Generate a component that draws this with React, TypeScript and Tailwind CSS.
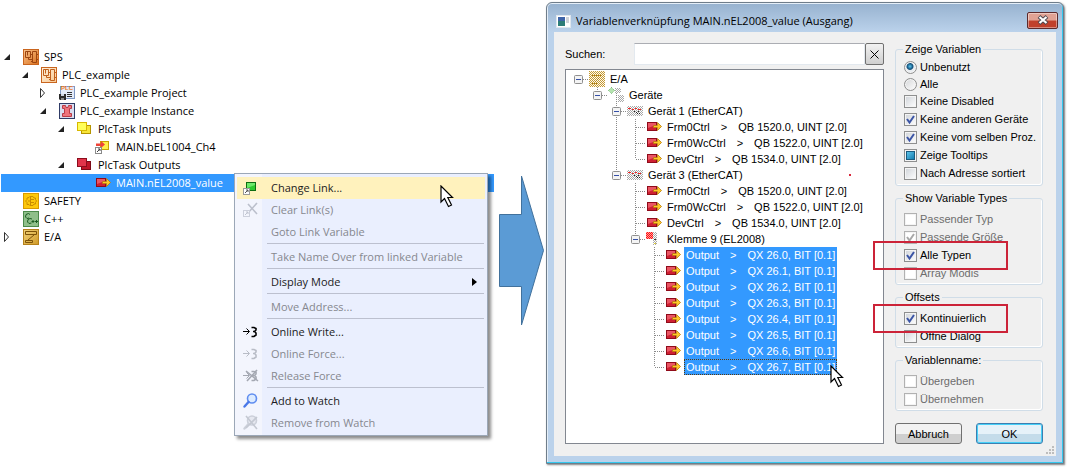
import React from "react";

/* ---------- project tree icons ---------- */

function ChipIcon({ dark = false }: { dark?: boolean }) {
  const line = dark ? "#9c4510" : "#c0601c";
  return (
    <svg width="16" height="16" viewBox="0 0 16 16" className="shrink-0">
      <defs>
        <linearGradient id={dark ? "chipDark" : "chipLight"} x1="0" y1="0" x2="1" y2="1">
          <stop offset="0" stopColor={dark ? "#fbc38c" : "#fff1dc"} />
          <stop offset="1" stopColor={dark ? "#d9701c" : "#f9c993"} />
        </linearGradient>
      </defs>
      <rect x="0.5" y="0.5" width="15" height="15" fill={dark ? "url(#chipDark)" : "url(#chipLight)"} stroke="#c9651e" />
      <path d="M2.5 2.5H7.5V8.5H2.5ZM4.5 2.5V6.5M5.500 8.500V10.500H9" fill="none" stroke={line} />
      <path d="M9.500 2.500H13.500V13.500H9.500ZM8 5.500H9M8 12.500H9M14 5.500H15M14 10.500H15" fill="none" stroke={line} />
    </svg>
  );
}

function ProjectIcon() {
  return (
    <svg width="16" height="16" viewBox="0 0 16 16" className="shrink-0">
      <rect x="1.5" y="1.5" width="14" height="12" fill="#e3ebf8" stroke="#7f98c4" />
      <path d="M8 7.500H13M8 9.500H13M8 11.500H13" stroke="#333" />
      <text x="2" y="5" fontSize="6" fontWeight="700" fontFamily="Liberation Sans, sans-serif" fill="#ee7a1c">PLC</text>
      <path d="M0 9H7V15H1L0 14Z" fill="#2a2a2a" />
      <rect x="2" y="9" width="3" height="2" fill="#cfd6e2" />
      <rect x="2" y="13" width="3" height="2" fill="#8a8a8a" />
    </svg>
  );
}

function InstanceIcon() {
  return (
    <svg width="16" height="16" viewBox="0 0 16 16" className="shrink-0">
      <rect x="0.5" y="0.5" width="15" height="15" fill="#d9ddf0" stroke="#2f3b66" />
      <path d="M3.5 2.5H6.500L7 4.500H9L9.500 2.500H12.500V5.500H10.500V10.500H12.500V13.500H3.500V10.500H5.500V5.500H3.500Z" fill="#ee737c" stroke="#b83a46" />
    </svg>
  );
}

function PairIcon({ red = false }: { red?: boolean }) {
  return (
    <svg width="16" height="16" viewBox="0 0 16 16" className="shrink-0">
      <rect x="4.500" y="4.500" width="9" height="8" fill={red ? "#c01428" : "#f7e53a"} stroke={red ? "#7c0a18" : "#b59400"} />
      <rect x="0.500" y="1.500" width="9" height="8" fill={red ? "#e0344a" : "#ffff5a"} stroke={red ? "#8c0c1c" : "#d8b800"} />
    </svg>
  );
}

function LinkedInputIcon() {
  return (
    <svg width="16" height="16" viewBox="0 0 16 16" className="shrink-0">
      <rect x="5.500" y="2.500" width="8" height="8" fill="#fff04a" stroke="#c8a400" />
      <path d="M1 4.500H6V2L10 5.500L6 9V7H1Z" fill="#ef4438" />
      <rect x="0.500" y="8.500" width="6" height="6" fill="#fff" stroke="#8a8a8a" />
      <path d="M2 13L5 10M3 10H5V12" fill="none" stroke="#444" />
    </svg>
  );
}

function OutputIcon() {
  return (
    <svg width="16" height="16" viewBox="0 0 16 16" className="shrink-0">
      <rect x="1.500" y="3.500" width="9" height="8" fill="#cf2032" stroke="#8f0b1a" />
      <path d="M2 4H10V6L2 9Z" fill="#ea5564" />
      <path d="M7.500 6.500H11.500V3.500L15.500 7.500L11.500 11.500V8.500H7.500Z" fill="#ffc928" stroke="#b8780c" strokeWidth="0.800" />
    </svg>
  );
}

function SafetyIcon() {
  return (
    <svg width="16" height="16" viewBox="0 0 16 16" className="shrink-0">
      <rect x="0.500" y="0.500" width="15" height="15" fill="#fdc80c" stroke="#d99a00" />
      <path d="M7.500 3L6 4.500L4 5V6.500L2.500 8L4 9.500V11.500H6L7.500 13M7.500 3V13M8 3.500H10L11 5H12.500V6.500L13.500 8L12.500 9.500V11H11L10 12.500H8M5 8H7M8 6.500H11M8 9.500H11" fill="none" stroke="#c98c00" />
    </svg>
  );
}

function CppIcon() {
  return (
    <svg width="16" height="16" viewBox="0 0 16 16" className="shrink-0">
      <rect x="0.500" y="0.500" width="15" height="15" fill="#8fbf8a" stroke="#4c8a4a" />
      <path d="M7 3.500L5.500 2.500L3 3.500L2.500 6L4 7.500L6 7M9 8L7 7.500L5 8.500L4.500 11L6 12.500L8.500 12M8.500 10.500H11.500M10 9V12M12 10.500H15M13.500 9V12" fill="none" stroke="#1c5c22" />
    </svg>
  );
}

function IoIcon() {
  return (
    <svg width="16" height="16" viewBox="0 0 16 16" className="shrink-0">
      <defs>
        <linearGradient id="ioGold" x1="0" y1="0" x2="1" y2="1">
          <stop offset="0" stopColor="#f2d27a" />
          <stop offset="1" stopColor="#cf9a28" />
        </linearGradient>
      </defs>
      <rect x="0.500" y="0.500" width="15" height="15" fill="url(#ioGold)" stroke="#b5811a" />
      <path d="M2.500 2.500H13.500V5.500H2.500ZM11 6L5 11M2.500 11.500H9.500V13.500H2.500Z" fill="none" stroke="#7c5208" />
    </svg>
  );
}

function Twisty({ open }: { open?: boolean }) {
  return (
    <svg width="10" height="12" viewBox="0 0 10 12" className="shrink-0">
      {open ? <path d="M7 3V9H1Z" fill="#222" /> : <path d="M1.500 1.500L5.500 6L1.500 10.500Z" fill="#fff" stroke="#333" />}
    </svg>
  );
}

/* ---------- project tree ---------- */

type Node = { label: string; pad: string; open?: boolean; leaf?: boolean; icon: React.ReactNode; selected?: boolean };

const nodes: Node[] = [
  { label: "SPS", pad: "pl-0.5", open: true, icon: <ChipIcon dark /> },
  { label: "PLC_example", pad: "pl-5", open: true, icon: <ChipIcon /> },
  { label: "PLC_example Project", pad: "pl-[38px]", icon: <ProjectIcon /> },
  { label: "PLC_example Instance", pad: "pl-[38px]", open: true, icon: <InstanceIcon /> },
  { label: "PlcTask Inputs", pad: "pl-14", open: true, icon: <PairIcon /> },
  { label: "MAIN.bEL1004_Ch4", pad: "pl-[74px]", leaf: true, icon: <LinkedInputIcon /> },
  { label: "PlcTask Outputs", pad: "pl-14", open: true, icon: <PairIcon red /> },
  { label: "MAIN.nEL2008_value", pad: "pl-[74px]", leaf: true, icon: <OutputIcon />, selected: true },
  { label: "SAFETY", pad: "pl-0.5", leaf: true, icon: <SafetyIcon /> },
  { label: "C++", pad: "pl-0.5", leaf: true, icon: <CppIcon /> },
  { label: "E/A", pad: "pl-0.5", icon: <IoIcon /> },
];

function ProjectTree() {
  return (
    <ul role="tree" aria-label="Projekt" className="ml-px mr-1 pt-12">
      {nodes.map((n) => (
        <li
          key={n.label}
          role="treeitem"
          aria-selected={!!n.selected}
          className={`flex h-[18px] items-center whitespace-nowrap ${n.pad} ${n.selected ? "bg-[#3399ff] text-white" : "text-black"}`}
        >
          <span className="flex w-5 shrink-0">{!n.leaf && <Twisty open={n.open} />}</span>
          {n.icon}
          <span className="ml-[5px]">{n.label}</span>
        </li>
      ))}
    </ul>
  );
}

/* ---------- context menu ---------- */

function ChangeLinkIcon() {
  return (
    <svg width="16" height="16" viewBox="0 0 16 16">
      <rect x="3.500" y="2.500" width="9" height="8" fill="#2fcb2f" stroke="#0d6d12" />
      <path d="M4 3H12V5L4 8Z" fill="#6ee86a" />
      <rect x="0.500" y="8.500" width="6" height="6" fill="#fff" stroke="#9a9a9a" />
      <path d="M2 13L5 10M3 10H5V12" fill="none" stroke="#555" />
    </svg>
  );
}
function ClearLinkIcon() {
  return (
    <svg width="16" height="16" viewBox="0 0 16 16">
      <path d="M5 2L14 12M14 1L4 12" stroke="#bcc0cc" strokeWidth="1.600" />
      <rect x="0.500" y="8.500" width="6" height="6" fill="#f3f5fd" stroke="#ccd0dc" />
      <path d="M2 13L5 10M3 10H5V12" fill="none" stroke="#c0c4d0" />
    </svg>
  );
}
function WriteIcon({ color, crossed = false }: { color: string; crossed?: boolean }) {
  return (
    <svg width="16" height="16" viewBox="0 0 16 16">
      <path d="M0 7.500H6M3.500 4.500L6.500 7.500L3.500 10.500" fill="none" stroke={color} />
      <path d="M8.500 3.500H11L13 4.500V6L11.500 7.500H10H11.500L13 9V11L11 12.500H8.500" fill="none" stroke={color} strokeWidth="1.600" />
      {crossed && <path d="M3 3L15 13M14 2L4 13" stroke={color} strokeWidth="1.600" />}
    </svg>
  );
}
function WatchIcon({ off = false }: { off?: boolean }) {
  return (
    <svg width="16" height="16" viewBox="0 0 16 16">
      <circle cx="9" cy="5.500" r="4.500" fill={off ? "#e6e8f0" : "#dcebff"} stroke={off ? "#ccd0da" : "#5f8df0"} strokeWidth="1.600" />
      <path d="M5.500 9L1.500 13.500" stroke={off ? "#ccd0da" : "#4a78e8"} strokeWidth="2.400" strokeLinecap="round" />
      {off && <path d="M3 1L14 14M14 2L3 13" stroke="#c4c8d2" strokeWidth="1.600" />}
    </svg>
  );
}

type Item = { label: string; icon?: React.ReactNode; off?: boolean; hot?: boolean; sub?: boolean };

const groups: Item[][] = [
  [
    { label: "Change Link...", icon: <ChangeLinkIcon />, hot: true },
    { label: "Clear Link(s)", icon: <ClearLinkIcon />, off: true },
    { label: "Goto Link Variable", off: true },
  ],
  [{ label: "Take Name Over from linked Variable", off: true }],
  [{ label: "Display Mode", sub: true }],
  [{ label: "Move Address...", off: true }],
  [
    { label: "Online Write...", icon: <WriteIcon color="#000" /> },
    { label: "Online Force...", icon: <WriteIcon color="#b8bcc6" />, off: true },
    { label: "Release Force", icon: <WriteIcon color="#a4a8b2" crossed />, off: true },
  ],
  [
    { label: "Add to Watch", icon: <WatchIcon /> },
    { label: "Remove from Watch", icon: <WatchIcon off />, off: true },
  ],
];

function Cursor({ className }: { className: string }) {
  return (
    <svg width="15" height="23" viewBox="0 0 15 23" className={`pointer-events-none absolute z-20 ${className}`}>
      <path d="M1 1V17L4.500 13.500L8.500 21.500L11.500 20L7.800 12.500H12.500Z" fill="#fff" stroke="#000" strokeWidth="1.200" />
    </svg>
  );
}

function ContextMenu() {
  return (
    <div
      role="menu"
      className="absolute left-[234px] top-[173px] z-10 w-[254px] border border-[#9ba7b7] bg-[linear-gradient(90deg,#f3f5fd_27px,#eaeffe_27px)] pt-[3px] pb-px shadow-[3px_3px_3px_rgba(0,0,0,0.45)]"
    >
      {groups.map((group, g) => (
        <div key={g} role="group">
          {g > 0 && <div role="separator" className="mr-[3px] ml-8 h-[3px] border-t border-[#bcc0cf]" />}
          {group.map((it) => (
            <button
              key={it.label}
              type="button"
              role="menuitem"
              disabled={it.off}
              className={`relative flex h-[22px] w-full items-center pl-2 text-left whitespace-nowrap ${it.off ? "text-[#86888f]" : "text-[#1b1b22]"}`}
            >
              {it.hot && <span className="absolute inset-x-[2px] inset-y-0 bg-[#fff2bd]" />}
              <span className="relative w-4 shrink-0">{it.icon}</span>
              <span className="relative ml-3 flex-1">{it.label}</span>
              {it.sub && (
                <svg width="5" height="8" viewBox="0 0 5 8" className="mr-2.5">
                  <path d="M0 0L5 4L0 8Z" fill="#000" />
                </svg>
              )}
              {it.hot && <Cursor className="top-2 right-8" />}
            </button>
          ))}
        </div>
      ))}
    </div>
  );
}

/* ---------- variable tree in the dialog ---------- */

type Cell = " " | "v" | "t" | "l" | "0" | "T" | "L";

function Guide({ kind }: { kind: Cell }) {
  const boxed = kind === "0" || kind === "T" || kind === "L";
  const line = { stroke: "#8a8a8a", strokeDasharray: "1 1" };
  return (
    <svg width="19" height="16" viewBox="0 0 19 16" className="shrink-0">
      {(kind === "v" || kind === "t" || kind === "T") && <path d="M8.500 0V16" {...line} />}
      {(kind === "l" || kind === "L") && <path d="M8.500 0V8" {...line} />}
      {kind !== " " && kind !== "v" && <path d="M9 8.500H19" {...line} />}
      {boxed && (
        <>
          <rect x="4.500" y="4.500" width="8" height="8" rx="1" fill="#f4f4f4" stroke="#8f8f8f" />
          <path d="M6 8.500H11" stroke="#3550a8" />
        </>
      )}
    </svg>
  );
}

function Dither({ kind }: { kind: "io" | "devices" | "device" | "terminal" }) {
  const id = `dither-${kind}`;
  return (
    <svg width="16" height="16" viewBox="0 0 16 16" className="shrink-0">
      <defs>
        <pattern id={id} width="2" height="2" patternUnits="userSpaceOnUse">
          <path d="M0 0H1V1H0ZM1 1H2V2H1Z" fill={kind === "io" ? "#c49a34" : "#a8a8a8"} />
        </pattern>
        <pattern id={`${id}-red`} width="2" height="2" patternUnits="userSpaceOnUse">
          <path d="M0 0H1V1H0ZM1 1H2V2H1Z" fill="#ff1010" />
        </pattern>
      </defs>
      {kind === "io" && (
        <>
          <rect width="16" height="16" fill="#fffaf0" />
          <rect width="16" height="16" fill={`url(#${id})`} />
          <path d="M3 4.500H13M10 7L6 11M3 12.500H9" stroke="#a87810" strokeDasharray="1 1" />
        </>
      )}
      {kind === "devices" && (
        <>
          <path d="M3.500 0.500L6.500 3.500L3.500 6.500L0.500 3.500Z" fill="#b5e3b0" stroke="#58a858" strokeDasharray="1 1" />
          <rect x="7" y="1" width="6" height="5" fill={`url(#${id})`} />
          <rect x="10" y="8" width="6" height="7" fill={`url(#${id})`} />
          <path d="M8.500 6V16" stroke="#8a8a8a" strokeDasharray="1 1" />
        </>
      )}
      {kind === "device" && (
        <>
          <rect y="3" width="16" height="10" fill={`url(#${id})`} />
          <path d="M1 5.500H4M5 6.500H7M8 5.500H10M11 6.500H14" stroke="#f02020" />
          <path d="M7 8.500H9M9 9.500H11M11 8.500H13M10 10.500H14" stroke="#222" strokeDasharray="1 1" />
        </>
      )}
      {kind === "terminal" && (
        <>
          <rect y="1" width="7" height="7" fill="#ff9c9c" />
          <rect y="1" width="7" height="7" fill={`url(#${id}-red)`} />
          <rect x="7" y="1" width="4" height="13" fill={`url(#${id})`} />
          <path d="M8 8.500H10" stroke="#333" />
          <path d="M8 12.500H10" stroke="#e0d040" />
        </>
      )}
    </svg>
  );
}

type Row = { cells: Cell[]; icon: React.ReactNode; text: string[]; selected?: boolean };

const frames = (first: Cell, last: Cell): Row[] => [
  { cells: [" ", " ", first, "t"], icon: <OutputIcon />, text: ["Frm0Ctrl", ">", "QB 1520.0, UINT [2.0]"] },
  { cells: [" ", " ", first, "t"], icon: <OutputIcon />, text: ["Frm0WcCtrl", ">", "QB 1522.0, UINT [2.0]"] },
  { cells: [" ", " ", first, last], icon: <OutputIcon />, text: ["DevCtrl", ">", "QB 1534.0, UINT [2.0]"] },
];

const rows: Row[] = [
  { cells: ["0"], icon: <Dither kind="io" />, text: ["E/A"] },
  { cells: [" ", "L"], icon: <Dither kind="devices" />, text: ["Geräte"] },
  { cells: [" ", " ", "T"], icon: <Dither kind="device" />, text: ["Gerät 1 (EtherCAT)"] },
  ...frames("v", "l"),
  { cells: [" ", " ", "L"], icon: <Dither kind="device" />, text: ["Gerät 3 (EtherCAT)"] },
  ...frames(" ", "t"),
  { cells: [" ", " ", " ", "L"], icon: <Dither kind="terminal" />, text: ["Klemme 9 (EL2008)"] },
  ...[0, 1, 2, 3, 4, 5, 6, 7].map(
    (n): Row => ({
      cells: [" ", " ", " ", " ", n === 7 ? "l" : "t"],
      icon: <OutputIcon />,
      text: ["Output", ">", `QX 26.${n}, BIT [0.1]`],
      selected: true,
    }),
  ),
];

function VariableTree() {
  return (
    <ul role="tree" aria-label="Variablen" className="flex-1 border border-[#828790] bg-white pt-px pl-1">
      {rows.map((r, i) => (
        <li key={i} role="treeitem" aria-selected={!!r.selected} className="flex h-4 items-center whitespace-nowrap">
          {r.cells.map((c, k) => (
            <Guide key={k} kind={c} />
          ))}
          {r.icon}
          <span
            className={`relative ml-[3px] flex h-4 items-center gap-[11px] px-0.5 ${r.selected ? "bg-[#3399ff] text-white" : ""} ${
              i === rows.length - 1 ? "outline-1 -outline-offset-1 outline-dotted outline-[#5a3a10]" : ""
            }`}
          >
            {r.text.map((t) => (
              <span key={t}>{t}</span>
            ))}
            {i === rows.length - 1 && <Cursor className="-right-2 top-1.5" />}
          </span>
          {i === 6 && <span className="mr-8 ml-auto size-0.5 bg-[#d8283c]" />}
        </li>
      ))}
    </ul>
  );
}

/* ---------- dialog controls ---------- */

function Check({ label, on, mixed, off, marked }: { label: string; on?: boolean; mixed?: boolean; off?: boolean; marked?: boolean }) {
  return (
    <label className={`relative flex h-[18px] items-center gap-[3px] whitespace-nowrap ${off ? "text-[#6d6d6d]" : "text-black"}`}>
      <span className="relative flex">
        <input
          type="checkbox"
          defaultChecked={on}
          disabled={off}
          aria-checked={mixed ? "mixed" : undefined}
          className={`peer size-[13px] appearance-none border bg-white shadow-[inset_0_0_0_1px_#f4f4f4] ${
            off ? "border-[#b1b1b1]" : "border-[#8e8f8f] bg-linear-to-br from-[#cfd3d8] to-white"
          }`}
        />
        <svg width="13" height="13" viewBox="0 0 13 13" className="pointer-events-none absolute inset-0 hidden peer-checked:block">
          <path d="M3 6L5.500 9.500L10 3" fill="none" stroke={off ? "#a8a8a8" : "#3c55a5"} strokeWidth="2" />
        </svg>
        {mixed && <span className="pointer-events-none absolute inset-0.5 border border-[#1b5c80] bg-linear-to-br from-[#5cc4ea] to-[#0f7fb0]" />}
      </span>
      <span>{label}</span>
      {marked && <span className="pointer-events-none absolute -top-[5px] -left-[31px] z-10 h-[29px] w-[135px] border-2 border-[#cc2338]" />}
    </label>
  );
}

function Radio({ label, on, height }: { label: string; on?: boolean; height: string }) {
  return (
    <label className={`flex items-center gap-[3px] ${height}`}>
      <input
        type="radio"
        name="filter"
        defaultChecked={on}
        className="size-[13px] appearance-none rounded-full border border-[#8e8f8f] bg-linear-to-br from-[#d4d6d8] to-white shadow-[inset_0_0_0_1px_#f4f4f4] checked:bg-[radial-gradient(circle_at_45%_40%,#5cc8f0_0,#0f4c78_3px,#e8ecf0_4px)]"
      />
      <span>{label}</span>
    </label>
  );
}

function Group({ title, pad, children }: { title: string; pad: string; children: React.ReactNode }) {
  return (
    <fieldset className={`min-w-0 rounded-[3px] border border-[#d0dde8] pl-2 shadow-[inset_-1px_-1px_0_#fff] ${pad}`}>
      <legend className="-ml-px bg-[#f0f0f0] px-0.5 leading-3">{title}</legend>
      {children}
    </fieldset>
  );
}

function LinkDialog() {
  return (
    <div
      role="dialog"
      aria-label="Variablenverknüpfung"
      className="mt-0.5 mr-[3px] self-start rounded-t-md border border-[#6f7d8a] bg-[#bbd2eb] px-[7px] pb-[7px] shadow-[inset_-1px_-1px_0_#35c8ee,inset_1px_1px_0_#e4eef8,1px_1px_2px_rgba(0,0,0,0.5)]"
    >
      <header className="-mx-1.5 mt-px flex h-7 items-center rounded-t bg-linear-to-b from-[#98b3d0] to-[#bbd2eb] pl-2 pr-1">
        <svg width="15" height="13" viewBox="0 0 15 13" className="mt-1.5 mr-[5px] shrink-0">
          <rect x="0.500" y="0.500" width="14" height="12" fill="#fff" stroke="#dfe6ee" />
          <rect x="2" y="2" width="7" height="9" fill="#2d7d78" />
          <rect x="2" y="2" width="7" height="4" fill="#3e64a8" />
          <rect x="10" y="2" width="3" height="6" fill="#cfd4da" />
        </svg>
        <h1 className="mt-1.5 flex-1 whitespace-nowrap font-['Open_Sans','Noto_Sans',sans-serif] text-[11px] leading-4 text-black">
          Variablenverknüpfung MAIN.nEL2008_value (Ausgang)
        </h1>
        <button
          type="button"
          aria-label="Schließen"
          className="mt-1 flex h-[17px] w-[31px] items-center justify-center rounded-[2px] border border-[#5c2a2c] bg-linear-to-b from-[#e0a294] from-45% to-[#c0402c] to-55% shadow-[inset_0_0_0_1px_rgba(255,255,255,0.4)]"
        >
          <svg width="12" height="10" viewBox="0 0 12 10">
            <path d="M2 1.500L10 8.500M10 1.500L2 8.500" stroke="#4e4850" strokeWidth="4" />
            <path d="M2.500 2L9.500 8M9.500 2L2.500 8" stroke="#fff" strokeWidth="2.200" />
          </svg>
        </button>
      </header>

      <div className="relative grid grid-cols-[minmax(0,1fr)_148px] gap-x-[11px] bg-[#f0f0f0] pt-[11px] pr-[13px] pb-3 pl-[11px] font-['Liberation_Sans',Arial,sans-serif] text-[11px] leading-[14px] text-black">
        <div className="flex flex-col gap-1">
          <div className="flex h-[22px] items-stretch">
            <label htmlFor="search" className="w-[69px] shrink-0 self-center">Suchen:</label>
            <input id="search" type="text" className="min-w-0 flex-1 border border-[#e3e9ef] border-t-[#abadb3] bg-white px-1" />
            <button type="button" aria-label="Suche löschen" className="flex w-[19px] items-center justify-center rounded-[2px] border border-[#707070] bg-linear-to-b from-[#f2f2f2] to-[#cfcfcf]">
              <svg width="9" height="9" viewBox="0 0 9 9">
                <path d="M0.500 0.500L8.500 8.500M8.500 0.500L0.500 8.500" stroke="#000" />
              </svg>
            </button>
          </div>
          <VariableTree />
        </div>

        <div className="flex flex-col gap-1.5">
          <Group title="Zeige Variablen" pad="pt-[3px] pb-[3px]">
            <Radio label="Unbenutzt" on height="h-[18px]" />
            <Radio label="Alle" height="h-4" />
            <Check label="Keine Disabled" />
            <Check label="Keine anderen Geräte" on />
            <Check label="Keine vom selben Proz." on />
            <Check label="Zeige Tooltips" mixed />
            <Check label="Nach Adresse sortiert" />
          </Group>
          <Group title="Show Variable Types" pad="pt-1.5 pb-0.5">
            <Check label="Passender Typ" off />
            <Check label="Passende Größe" on off />
            <Check label="Alle Typen" on marked />
            <Check label="Array Modis" off />
          </Group>
          <Group title="Offsets" pad="pt-1.5 pb-0.5">
            <Check label="Kontinuierlich" on marked />
            <Check label="Öffne Dialog" />
          </Group>
          <Group title="Variablenname:" pad="pt-1.5 pb-0.5">
            <Check label="Übergeben" off />
            <Check label="Übernehmen" off />
          </Group>
          <div className="mt-1.5 grid h-[21px] grid-cols-2 gap-[14px]">
            <button type="button" className="rounded-[3px] border border-[#707070] bg-linear-to-b from-[#f2f2f2] from-50% to-[#cfcfcf] to-55%">Abbruch</button>
            <button type="button" className="rounded-[3px] border border-[#3c7fb1] bg-linear-to-b from-[#e6f2f9] from-50% to-[#c4dcea] to-55% shadow-[inset_0_0_0_1px_#46d0f8]">OK</button>
          </div>
        </div>

        <svg width="8" height="8" viewBox="0 0 8 8" className="absolute right-0.5 bottom-0.5">
          <path d="M6 0H8V2H6ZM3 3H5V5H3ZM6 3H8V5H6ZM0 6H2V8H0ZM3 6H5V8H3ZM6 6H8V8H6Z" fill="#bdbdbd" />
        </svg>
      </div>
    </div>
  );
}

export default function App() {
  return (
    <main className="grid grid-cols-[498fr_48px_521fr] bg-white">
      <section className="relative min-h-[467px] min-w-0 font-['Open_Sans','Noto_Sans',sans-serif] text-[11px] leading-4">
        <ProjectTree />
        <ContextMenu />
      </section>
      <div className="flex items-start pt-[174px] pl-px">
        <svg width="45" height="153" viewBox="0 0 45 153">
          <path d="M0.500 40.500H22.500V2L44.500 76.500L22.500 151V112.500H0.500Z" fill="#5b9bd5" stroke="#41719c" />
        </svg>
      </div>
      <LinkDialog />
    </main>
  );
}
